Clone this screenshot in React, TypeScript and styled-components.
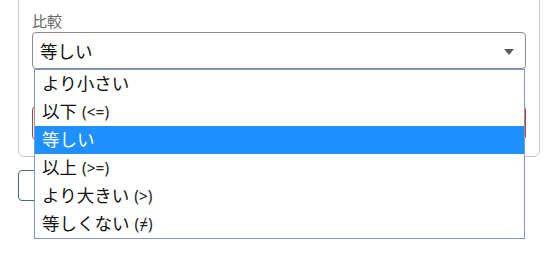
import styled, { createGlobalStyle } from "styled-components";

interface Option {
    id: number,
    text: string,
    sign?: string
}

const options: Option[] = [
    { id: 1, text: 'より小さい' },
    { id: 2, text: '以下', sign: '(<=)' },
    { id: 3, text: '等しい' },
    { id: 4, text: '以上', sign: '(>=)' },
    { id: 5, text: 'より大きい', sign: '(>)' },
    { id: 6, text: '等しくない', sign: '(≠)' }
]

const selectedId = 3;

const App = () => {
    return (
        <Page>
            <GlobalStyle />
            <Card>
                <Field>
                    <Label>比較</Label>
                    <SelectWrap>
                        <Select>
                            <span>等しい</span>
                            <Arrow />
                        </Select>
                        <Dropdown>
                            {
                                options.map((item) => {
                                    return (
                                        <Item key={item.id} $active={item.id === selectedId}>
                                            {item.text}
                                            {item.sign && <Sign $active={item.id === selectedId}>{item.sign}</Sign>}
                                        </Item>
                                    )
                                })
                            }
                        </Dropdown>
                    </SelectWrap>
                </Field>
                <Field $spaced>
                    <Input type="text" aria-label="値" />
                </Field>
            </Card>
            <Button type="button" aria-label="検索" />
        </Page>
    )
}

export default App;

const GlobalStyle = createGlobalStyle`
    body {
        margin: 0;
        background: #fff;
        font-family: "Noto Sans CJK JP", "Noto Sans", sans-serif;
        color: #111;
    }
`

const Page = styled.div`
    width: 560px;
    height: 255px;
    overflow: hidden;
    padding-left: 18px;
    box-sizing: border-box;
`

const Card = styled.div`
    width: 522px;
    box-sizing: border-box;
    margin-top: -20px;
    padding: 30px 13px 16px;
    border: 1px solid #c8c8c8;
    border-radius: 6px;
    background: #fff;
`

const Field = styled.div<{ $spaced?: boolean }>`
    display: flex;
    flex-direction: column;
    margin-top: ${({ $spaced }) => ($spaced ? '37px' : '0')};
`

const Label = styled.label`
    font-size: 15px;
    line-height: 20px;
    color: #666;
    margin-bottom: 1px;
`

const SelectWrap = styled.div`
    position: relative;
`

const Select = styled.div`
    height: 37px;
    box-sizing: border-box;
    border: 1px solid #8c8c8c;
    border-radius: 4px;
    padding: 0 11px 0 7px;
    display: flex;
    align-items: center;
    justify-content: space-between;
    font-size: 17.5px;
    color: #111;
`

const Arrow = styled.span`
    width: 0;
    height: 0;
    border-left: 5.5px solid transparent;
    border-right: 5.5px solid transparent;
    border-top: 6px solid #5a5a5a;
    margin-top: 3px;
`

const Dropdown = styled.ul`
    position: absolute;
    top: 37px;
    left: 2px;
    right: 1px;
    margin: 0;
    padding: 0;
    list-style: none;
    background: #fff;
    border: 1px solid #7b9bcf;
    z-index: 2;
`

const Item = styled.li<{ $active: boolean }>`
    height: 28px;
    line-height: 26px;
    padding-left: 7px;
    font-size: 17.5px;
    background: ${({ $active }) => ($active ? '#1e90ff' : '#fff')};
    color: ${({ $active }) => ($active ? '#fff' : '#111')};
    white-space: nowrap;
`

const Sign = styled.span<{ $active: boolean }>`
    font-family: "Noto Sans", sans-serif;
    font-size: 15.5px;
    margin-left: 5px;
    color: ${({ $active }) => ($active ? '#fff' : '#222')};
`

const Input = styled.input`
    height: 34px;
    box-sizing: border-box;
    border: 1px solid #c0392b;
    border-radius: 4px;
    padding: 0 8px;
    font-size: 16px;
    outline: 0;
`

const Button = styled.button`
    display: block;
    margin-top: 13px;
    width: 120px;
    height: 31px;
    border: 1px solid #4a6585;
    border-radius: 4px;
    background: #fff;
`
